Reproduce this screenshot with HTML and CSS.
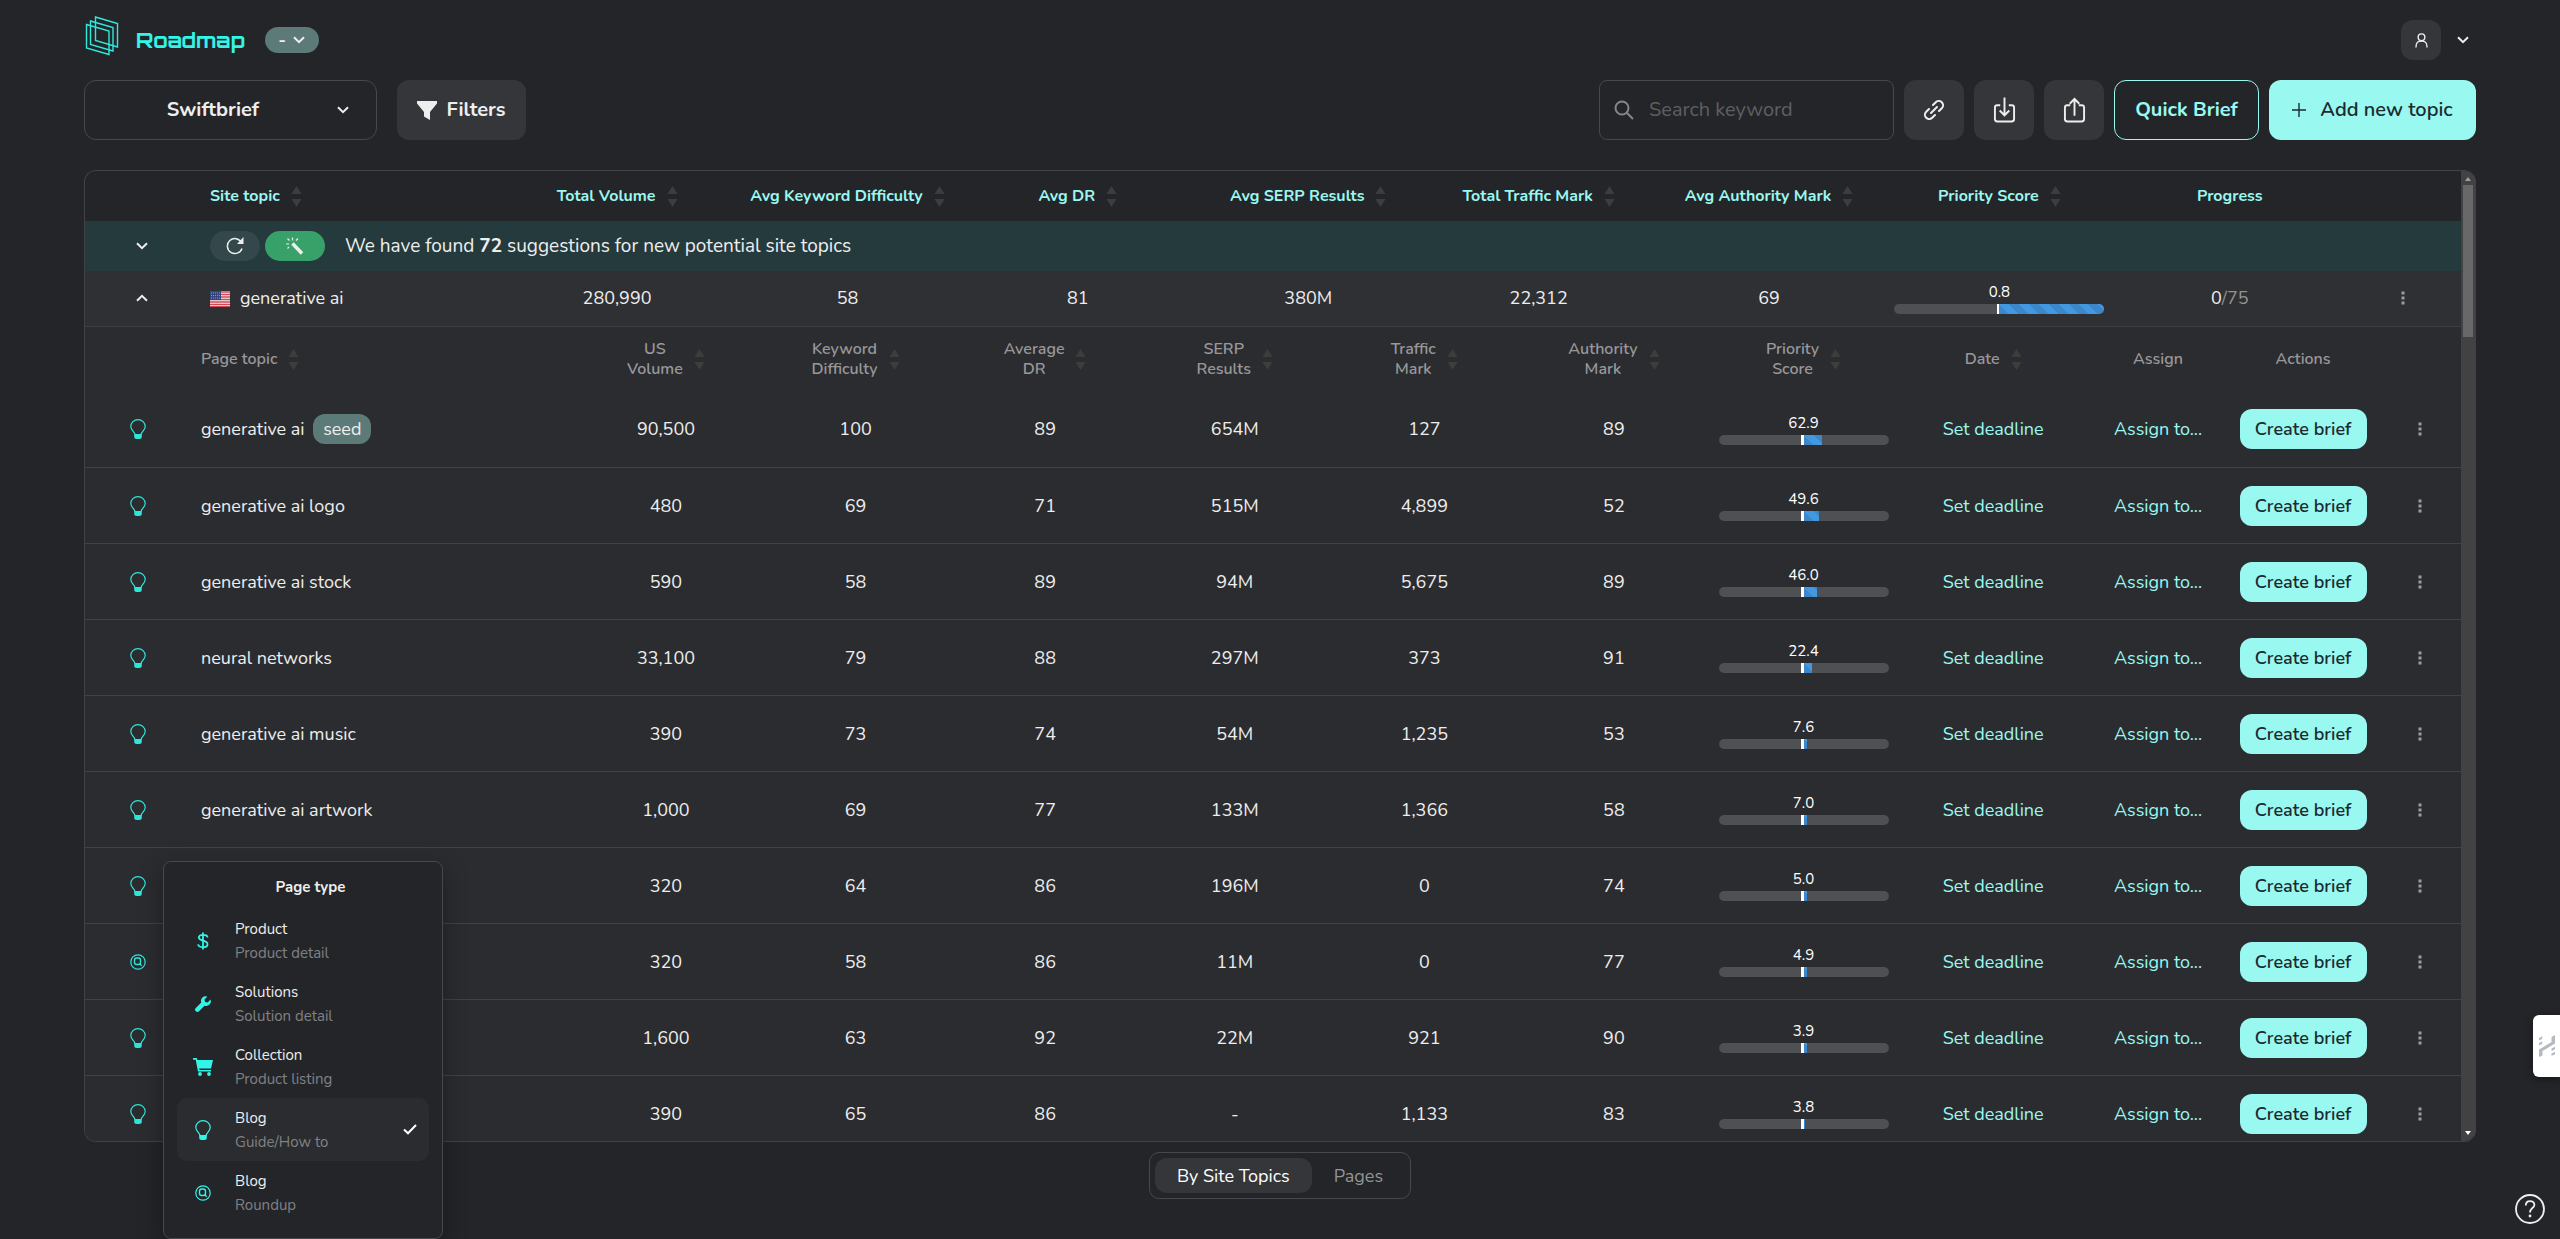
FILE: index.html
```html
<!DOCTYPE html>
<html lang="en">
<head>
  <meta charset="utf-8"/>
  <title>Roadmap</title>
  <link rel="stylesheet" href="styles.css">
</head>
<body>

<svg class="sprite" aria-hidden="true">
  <symbol id="chevron" viewBox="0 0 12 8"><path d="M1 1.200 6 6.200 11 1.200" fill="none" stroke="currentColor" stroke-width="2"/></symbol>
  <symbol id="sort" viewBox="0 0 11 21"><path d="M5.500 0 10.500 8H.5zM5.500 21 .5 13h10z" fill="currentColor"/></symbol>
  <symbol id="bulb" viewBox="0 0 16 20">
    <path d="M5 15.500C4.500 12.500.8 11 .8 7.500a7.200 6.900 0 0 1 14.400 0c0 3.500-3.700 5-4.200 8z" fill="none" stroke="currentColor" stroke-width="1.200"/>
    <path d="M4.200 15h7.600v2.500a2.500 2.500 0 0 1-2.500 2.500H6.700a2.500 2.500 0 0 1-2.500-2.500z" fill="currentColor"/>
  </symbol>
  <symbol id="roundup" viewBox="0 0 16 16">
    <g fill="none" stroke="currentColor"><circle cx="8" cy="8" r="7.200" stroke-width="1.200"/><rect x="4.500" y="4" width="6" height="6.500" rx="2.200" stroke-width="1.400"/><path d="m9.500 9.500 2.200 2.200" stroke-width="1.400"/></g>
  </symbol>
  <symbol id="dots" viewBox="0 0 4 14"><path d="M.5.5h3v3h-3zM.5 5.500h3v3h-3zM.5 10.500h3v3h-3z" fill="currentColor"/></symbol>
</svg>

<header class="topbar">
  <svg class="logo" viewBox="0 0 34 42" fill="none" stroke="currentColor" stroke-width="1.400">
    <path d="M10.500 2 32.500 8.500V32l-22-6.500z"/><path d="M5.500 6 28 12.500V36L5.500 29.500z"/><path d="M1.500 9.500 24 16v23.500L1.500 33z"/>
  </svg>
  <h1>Roadmap</h1>
  <button class="version" type="button">- <svg class="chevron"><use href="#chevron"/></svg></button>
  <button class="avatar" type="button" aria-label="Account">
    <svg viewBox="0 0 14 16" fill="none" stroke="currentColor" stroke-width="1.500"><circle cx="7" cy="4.500" r="3.600"/><path d="M1 15.500C1 10 3 8.500 7 8.500s6 1.500 6 7"/></svg>
  </button>
  <svg class="chevron"><use href="#chevron"/></svg>
</header>

<div class="toolbar">
  <button class="project" type="button"><span>Swiftbrief</span><svg class="chevron"><use href="#chevron"/></svg></button>
  <button class="filters" type="button">
    <svg viewBox="0 0 20 19"><path d="M0 0h20v2.500L13 11v8l-6-3.500V11L0 2.500z" fill="currentColor"/></svg>Filters
  </button>
  <label class="search">
    <svg viewBox="0 0 20 20" fill="none" stroke="currentColor" stroke-width="2"><circle cx="8" cy="8" r="6.500"/><path d="m12.800 12.800 6.200 6.200"/></svg>
    <input type="text" placeholder="Search keyword" aria-label="Search keyword">
  </label>
  <button class="square" type="button" aria-label="Copy link">
    <svg class="link" viewBox="0 0 20 20" fill="none" stroke="currentColor" stroke-width="2" stroke-linecap="round"><path d="m7 13 6-6M9 5l2.800-2.800a4 4 0 0 1 6 6L15 11M11 15l-2.800 2.800a4 4 0 0 1-6-6L5 9"/></svg>
  </button>
  <button class="square" type="button" aria-label="Import">
    <svg viewBox="0 0 24 26" fill="none" stroke="currentColor" stroke-width="2"><path d="M7.500 8H4.500A2.500 2.500 0 0 0 2 10.500v12A2.500 2.500 0 0 0 4.500 25h15a2.500 2.500 0 0 0 2.500-2.500v-12A2.500 2.500 0 0 0 19.500 8h-3M12 0v18M7 13.500l5 5 5-5"/></svg>
  </button>
  <button class="square" type="button" aria-label="Export">
    <svg viewBox="0 0 24 26" fill="none" stroke="currentColor" stroke-width="2"><path d="M7.500 8H4.500A2.500 2.500 0 0 0 2 10.500v12A2.500 2.500 0 0 0 4.500 25h15a2.500 2.500 0 0 0 2.500-2.500v-12A2.500 2.500 0 0 0 19.500 8h-3M12 19V1.500M7 6.500l5-5 5 5"/></svg>
  </button>
  <button class="quick" type="button">Quick Brief</button>
  <button class="add" type="button"><svg viewBox="0 0 14 14"><path d="M7 0v14M0 7h14" stroke="currentColor" stroke-width="1.400"/></svg>Add new topic</button>
</div>

<main class="panel">
  <div class="scroller">
    <table class="site">
      <colgroup><col class="col-toggle"><col class="col-site"><col span="8"><col class="col-more"></colgroup>
      <thead><tr id="siteHead"></tr></thead>
      <tbody>
        <tr class="suggestions">
          <td class="toggle"><svg class="chevron"><use href="#chevron"/></svg></td>
          <td colspan="10">
            <div class="found">
              <button class="refresh" type="button" aria-label="Refresh">
                <svg viewBox="0 0 18 18"><path d="M15.500 5.500A7.500 7.500 0 1 0 16 11.500" fill="none" stroke="currentColor" stroke-width="1.500"/><path d="M17.500 0v7H11z" fill="currentColor"/></svg>
              </button>
              <button class="magic" type="button" aria-label="Generate">
                <svg viewBox="0 0 18 18" fill="none" stroke="currentColor"><path d="m6.500 6.500 9.500 10" stroke-width="3.500"/><path d="M6.500 3.500V.5M3.500 3.500l-2-2M3 7H0M10 3.500l2-2M3 10l-1.500 1.500" stroke-width="1.200"/></svg>
              </button>
              <p>We have found <b>72</b> suggestions for new potential site topics</p>
            </div>
          </td>
        </tr>
        <tr class="topic">
          <td class="toggle"><svg class="chevron up"><use href="#chevron"/></svg></td>
          <td class="name">
            <svg class="flag" viewBox="0 0 20 16"><path fill="#f0eeee" d="M0 0h20v16H0z"/><path d="M0 1h20M0 3.500h20M0 6h20M0 8.500h20M0 11h20M0 13.500h20M0 15.700h20" stroke="#cf4a57" stroke-width="1.300"/><path fill="#36457c" d="M0 0h11v9H0z"/><path d="M1 2h9M1 4.500h9M1 7h9" stroke="#8d97ba" stroke-dasharray="1 1"/></svg>generative ai
          </td>
          <td>280,990</td><td>58</td><td>81</td><td>380M</td><td>22,312</td><td>69</td>
          <td><div class="score wide"><span>0.8</span><div class="track"><i style="width: 50%"></i></div></div></td>
          <td>0<span class="total">/75</span></td>
          <td><svg class="dots"><use href="#dots"/></svg></td>
        </tr>
        <tr>
          <td colspan="11" class="nested">
            <table class="pages">
              <colgroup><col class="col-type"><col class="col-page"><col span="8"><col class="col-assign"><col class="col-actions"><col class="col-menu"></colgroup>
              <thead><tr id="pageHead"></tr></thead>
              <tbody id="pageRows"></tbody>
            </table>
          </td>
        </tr>
      </tbody>
    </table>
  </div>
  <div class="scrollbar"><div class="thumb"></div></div>
</main>

<nav class="tabs">
  <button class="active" type="button">By Site Topics</button>
  <button type="button">Pages</button>
</nav>

<div class="page-type">
  <h2>Page type</h2>
  <ul>
    <li><svg viewBox="0 0 12 18"><path d="M10.500 5.500C10.500 3.500 8.500 2.800 6 2.800S1.800 3.700 1.800 5.600C1.800 9.800 10.500 7.500 10.500 12.200c0 2-2 3-4.500 3s-4.800-.8-4.800-3M6 .5v17" fill="none" stroke="currentColor" stroke-width="1.800"/></svg><div>Product<small>Product detail</small></div></li>
    <li><svg class="wrench" viewBox="0 0 16 16"><path d="M15.500 3.600 12.600 6.500 10 6 9.500 3.400 12.400.5A4.700 4.700 0 0 0 6.300 6.500L.8 12a2.200 2.200 0 0 0 3.200 3.200l5.500-5.500a4.700 4.700 0 0 0 6-6.100z" fill="currentColor"/></svg><div>Solutions<small>Solution detail</small></div></li>
    <li><svg viewBox="0 0 20 18"><path d="M0 0h3.800l.5 2H20l-2 8.500H6.200l.3 1.500H18v1.500H5L2.700 1.800H0z" fill="currentColor"/><circle cx="7" cy="16" r="1.900" fill="currentColor"/><circle cx="16" cy="16" r="1.900" fill="currentColor"/></svg><div>Collection<small>Product listing</small></div></li>
    <li class="selected"><svg class="bulb"><use href="#bulb"/></svg><div>Blog<small>Guide/How to</small></div><svg class="check" viewBox="0 0 14 11"><path d="M1 5.500 5 9.300 13 1" fill="none" stroke="currentColor" stroke-width="2"/></svg></li>
    <li><svg class="roundup"><use href="#roundup"/></svg><div>Blog<small>Roundup</small></div></li>
  </ul>
</div>

<button class="widget" type="button" aria-label="Feedback">
  <svg viewBox="0 0 16 22" fill="#b3bac2"><path d="M0 14.500 12.500 7V2L16 0v8.500L3.500 16v4.500L0 22zM0 3l3.200-1.700v2.500L0 5.500zM0 8l3.200-1.700v2.500L0 10.500zM12.500 13.500l3.500-1.700v2.500l-3.500 1.700zM12.500 18.500l3.500-1.700v2.500L12.500 21z"/></svg>
</button>
<button class="help" type="button" aria-label="Help">
  <svg viewBox="0 0 30 30" fill="none" stroke="currentColor"><circle cx="15" cy="15" r="14" stroke-width="1.800"/><path d="M10.800 11.500c0-6 8.600-5.500 8.600-.8 0 3.500-4.400 3.300-4.400 7.800" stroke-width="1.800"/><circle cx="15" cy="22" r=".7" stroke-width="1.400"/></svg>
</button>

<script src="script.js"></script>
</body>
</html>
```
FILE: styles.css
```css
*,
*::before,
*::after {
  box-sizing: border-box;
}
body {
  margin: 0;
  height: 100vh;
  padding: 0 84px;
  display: flex;
  flex-direction: column;
  overflow: hidden;
  background: #242529;
  color: #eee;
  font: 18px/24px Nunito, Lato, sans-serif;
}
button {
  border: 0;
  margin: 0;
  padding: 0;
  background: none;
  color: inherit;
  font: inherit;
  display: flex;
  align-items: center;
  justify-content: center;
  cursor: pointer;
}
.sprite {
  display: none;
}
.chevron {
  width: 12px;
  height: 8px;
}
.chevron.up {
  transform: rotate(180deg);
}
.topbar {
  height: 80px;
  flex: none;
  display: flex;
  align-items: center;
}
.logo {
  width: 34px;
  height: 42px;
  margin: 0 17px 8px 1px;
  color: #2ee9dc;
}
.topbar h1 {
  margin: 0;
  font: bold 21px/28px Orbitron, "DejaVu Sans", sans-serif;
  color: #33f5e7;
}
.version {
  width: 54px;
  height: 26px;
  margin-left: 20px;
  gap: 7px;
  border-radius: 13px;
  background: #5c7a77;
  font-weight: bold;
}
.avatar {
  width: 40px;
  height: 40px;
  margin: 0 16px 0 auto;
  border-radius: 12px;
  background: #35363a;
}
.avatar svg {
  width: 13px;
  height: 15px;
}
.topbar > .chevron {
  margin-right: 7px;
}
.toolbar {
  flex: none;
  display: flex;
  gap: 10px;
  font-size: 20px;
}
.toolbar > * {
  height: 60px;
  border-radius: 12px;
}
.project {
  width: 293px;
  padding: 0 27px 0 4px;
  border: 1px solid #47484c;
  font-weight: bold;
}
.project span {
  flex: 1;
}
.filters {
  width: 129px;
  margin-left: 10px;
  gap: 9px;
  background: #35363a;
  font-weight: bold;
}
.filters svg {
  width: 20px;
  height: 19px;
}
.search {
  width: 295px;
  margin-left: auto;
  padding: 0 14px;
  display: flex;
  align-items: center;
  gap: 15px;
  border: 1px solid #47484c;
  border-radius: 8px;
  color: #85868a;
}
.search svg {
  width: 20px;
  height: 20px;
  flex: none;
}
.search input {
  min-width: 0;
  flex: 1;
  padding: 0;
  border: 0;
  outline: 0;
  background: none;
  color: #eee;
  font: inherit;
}
.search input::placeholder {
  color: #5e5f62;
}
.square {
  width: 60px;
  background: #35363a;
}
.square svg {
  width: 23px;
  height: 26px;
}
.square .link {
  width: 20px;
  height: 20px;
}
.quick {
  width: 145px;
  border: 1px solid #99f8f0;
  color: #99f8f0;
  font-weight: bold;
}
.add {
  width: 207px;
  gap: 14px;
  background: #99f8f0;
  color: #1b2b30;
  font-weight: 600;
}
.add svg {
  width: 14px;
  height: 14px;
}
.panel {
  flex: 1;
  min-height: 0;
  margin-top: 30px;
  display: flex;
  border: 1px solid #414246;
  border-right: 0;
  border-radius: 12px;
  overflow: hidden;
}
.scroller {
  flex: 1;
  overflow: hidden;
}
.scrollbar {
  width: 15px;
  padding: 14px 3px 0 2px;
  position: relative;
  background: #424242;
}
.scrollbar::before,
.scrollbar::after {
  content: "";
  position: absolute;
  left: 4px;
  border: 3px solid transparent;
}
.scrollbar::before {
  top: 3px;
  border-bottom: 4px solid #a0a0a0;
}
.scrollbar::after {
  bottom: 3px;
  border-top: 4px solid #fff;
}
.thumb {
  height: 152px;
  background: #686868;
}
table {
  width: 100%;
  table-layout: fixed;
  border-collapse: collapse;
  text-align: center;
}
th,
td {
  padding: 0;
}
td > svg {
  display: block;
  margin: 0 auto;
}
.col-toggle {
  width: 108px;
}
.col-site {
  width: 13%;
}
.col-more {
  width: 116px;
}
.col-type {
  width: 106px;
}
.col-page {
  width: 16%;
}
.col-assign {
  width: 140px;
}
.col-actions {
  width: 150px;
}
.col-menu {
  width: 83px;
}
.heading {
  display: flex;
  align-items: center;
  justify-content: center;
  gap: 11px;
}
.heading svg {
  width: 11px;
  height: 21px;
  color: #3c3d3d;
}
#siteHead {
  height: 50px;
  color: #99f8f0;
  font-size: 16px;
}
.site th:nth-child(2) .heading {
  justify-content: flex-start;
  padding-left: 17px;
}
.site .pages th:nth-child(2) .heading {
  padding-left: 10px;
}
.toggle {
  padding-left: 6px;
}
.suggestions {
  height: 50px;
  background: #253a3d;
}
.found {
  padding-left: 17px;
  display: flex;
  align-items: center;
}
.found p {
  margin: 0 0 0 20px;
  font-size: 19px;
}
.found button {
  height: 30px;
  border-radius: 15px;
}
.found svg {
  width: 18px;
  height: 18px;
}
.refresh {
  width: 50px;
  background: #34474b;
}
.magic {
  width: 60px;
  margin-left: 5px;
  background: #38a169;
}
.topic {
  height: 55px;
  background: #2f3034;
  border-bottom: 1px solid #3e3f43;
}
.topic .name {
  padding-left: 17px;
  text-align: left;
}
.topic .flag {
  display: inline-block;
  width: 20px;
  height: 16px;
  margin: 0 10px 0 0;
  vertical-align: -3px;
}
.total {
  color: #939393;
}
.dots {
  width: 4px;
  height: 14px;
  color: #9c9c9e;
}
.score {
  width: 170px;
  margin: 0 auto;
  font-size: 15px;
  line-height: 18px;
  color: #fff;
}
.score.wide {
  width: 210px;
}
.track {
  height: 10px;
  margin-top: 3px;
  display: flex;
  border-radius: 5px;
  overflow: hidden;
  background: #4f5054;
}
.track::before {
  content: "";
  width: 50%;
  flex: none;
  border-right: 3px solid #fff;
}
.wide .track::before {
  border-right-width: 2px;
}
.track i {
  background: repeating-linear-gradient(45deg, #3c87ca 0 7px, #4299e1 7px 14px);
}
.nested {
  background: #2b2c30;
}
#pageHead {
  height: 65px;
  color: #98989a;
  font-size: 16px;
  line-height: 20px;
}
.pages th {
  font-weight: 600;
}
.pages tbody tr {
  height: 76px;
  border-bottom: 1px solid #414246;
}
.pages .type {
  width: 16px;
  height: 20px;
  color: #2fe5d9;
}
.pages .name {
  padding-left: 10px;
  text-align: left;
}
.seed {
  display: inline-block;
  margin-left: 4px;
  padding: 3px 10px;
  border-radius: 12px;
  background: #5c7a77;
}
.pages a {
  color: #99f8f0;
  text-decoration: none;
}
.create {
  width: 127px;
  height: 40px;
  margin: 0 auto;
  border-radius: 12px;
  background: #99f8f0;
  color: #1b2b30;
  font-weight: 600;
}
.tabs {
  flex: none;
  align-self: center;
  margin: 10px 0 40px;
  padding: 5px;
  display: flex;
  border: 1px solid #47484c;
  border-radius: 10px;
}
.tabs button {
  height: 35px;
  padding: 0 22px;
  border-radius: 12px;
  color: #939396;
}
.tabs .active {
  background: #35363a;
  color: #fff;
}
.page-type {
  position: absolute;
  left: 163px;
  bottom: 0;
  width: 280px;
  height: 378px;
  padding: 13px;
  border: 1px solid #47484c;
  border-radius: 8px;
  background: #242529;
  box-shadow: 0 8px 24px rgba(0, 0, 0, .35);
  font-size: 15px;
}
.page-type h2 {
  margin: 0 0 10px 15px;
  font-size: 15px;
  line-height: 24px;
  text-align: center;
}
.page-type ul {
  margin: 0;
  padding: 0;
  list-style: none;
}
.page-type li {
  height: 63px;
  padding: 0 12px 0 16px;
  display: flex;
  align-items: center;
  gap: 22px;
  border-radius: 10px;
}
.page-type li.selected {
  background: #2b2c30;
}
.page-type small {
  display: block;
  font-size: 15px;
  color: #808184;
}
.page-type li svg {
  width: 20px;
  height: 18px;
  color: #33f5e7;
}
.page-type li .wrench,
.page-type li .roundup {
  height: 16px;
}
.page-type li .bulb {
  height: 20px;
}
.page-type li .check {
  width: 14px;
  height: 11px;
  margin-left: auto;
  color: #fff;
}
.widget {
  position: absolute;
  right: 0;
  top: 1015px;
  width: 27px;
  height: 62px;
  border-radius: 6px 0 0 6px;
  background: #fff;
  box-shadow: 0 2px 8px rgba(0, 0, 0, .4);
}
.widget svg {
  width: 16px;
  height: 22px;
}
.help {
  position: absolute;
  right: 15px;
  bottom: 15px;
}
.help svg {
  width: 30px;
  height: 30px;
}
```
FILE: script.js
```js
var siteColumns = ["", "Site topic", "Total Volume", "Avg Keyword Difficulty", "Avg DR", "Avg SERP Results",
  "Total Traffic Mark", "Avg Authority Mark", "Priority Score", "Progress", ""];
var pageColumns = ["", "Page topic", "US<br>Volume", "Keyword<br>Difficulty", "Average<br>DR", "SERP<br>Results",
  "Traffic<br>Mark", "Authority<br>Mark", "Priority<br>Score", "Date", "Assign", "Actions", ""];
var unsorted = ["", "Progress", "Assign", "Actions"];

// icon, topic, volume, difficulty, DR, SERP results, traffic, authority, priority, bar %
var pages = [
  ["bulb", "generative ai <span class=\"seed\">seed</span>", "90,500", 100, 89, "654M", "127", 89, "62.9", 11],
  ["bulb", "generative ai logo", "480", 69, 71, "515M", "4,899", 52, "49.6", 9],
  ["bulb", "generative ai stock", "590", 58, 89, "94M", "5,675", 89, "46.0", 8],
  ["bulb", "neural networks", "33,100", 79, 88, "297M", "373", 91, "22.4", 5],
  ["bulb", "generative ai music", "390", 73, 74, "54M", "1,235", 53, "7.6", 2],
  ["bulb", "generative ai artwork", "1,000", 69, 77, "133M", "1,366", 58, "7.0", 2],
  ["bulb", "", "320", 64, 86, "196M", "0", 74, "5.0", 2],
  ["roundup", "", "320", 58, 86, "11M", "0", 77, "4.9", 2],
  ["bulb", "", "1,600", 63, 92, "22M", "921", 90, "3.9", 2],
  ["bulb", "", "390", 65, 86, "-", "1,133", 83, "3.8", 1]
];

function heading(text) {
  let sort = unsorted.includes(text) ? "" : `<svg><use href="#sort"/></svg>`;
  return `<th><div class="heading"><span>${text}</span>${sort}</div></th>`;
}

function pageRow([icon, topic, ...rest]) {
  let bar = rest.pop();
  let score = rest.pop();
  return `<tr>
    <td><svg class="type"><use href="#${icon}"/></svg></td>
    <td class="name">${topic}</td>
    ${rest.map(value => `<td>${value}</td>`).join("")}
    <td><div class="score"><span>${score}</span><div class="track"><i style="width: ${bar}%"></i></div></div></td>
    <td><a href="#">Set deadline</a></td>
    <td><a href="#">Assign to...</a></td>
    <td><button class="create" type="button">Create brief</button></td>
    <td><svg class="dots"><use href="#dots"/></svg></td>
  </tr>`;
}

document.getElementById("siteHead").innerHTML = siteColumns.map(heading).join("");
document.getElementById("pageHead").innerHTML = pageColumns.map(heading).join("");
document.getElementById("pageRows").innerHTML = pages.map(pageRow).join("");
```
